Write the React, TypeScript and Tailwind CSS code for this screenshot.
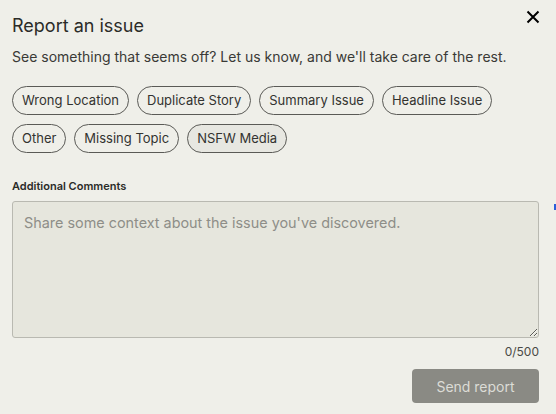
import React from 'react';

const tagsRowOne = ['Wrong Location', 'Duplicate Story', 'Summary Issue', 'Headline Issue'];
const tagsRowTwo = ['Other', 'Missing Topic', 'NSFW Media'];

function Tag({ label, active }: { label: string; active?: boolean }) {
  return (
    <button
      className={
        active
          ? 'h-[29px] px-[9px] rounded-full border border-[#5a5a56] bg-[#e7e7e1] text-[13px] text-[#333330]'
          : 'h-[29px] px-[9px] rounded-full border border-[#5a5a56] text-[13px] text-[#333330]'
      }
    >
      {label}
    </button>
  );
}

export default function App() {
  return (
    <div className="relative w-[556px] h-[414px] bg-[#efefe9] font-['Inter',sans-serif] px-3 pt-[14px]">
      <button className="absolute right-[16px] top-[10px] w-[14px] h-[14px] text-black">
        <svg viewBox="0 0 14 14" width="14" height="14" fill="none" stroke="currentColor" strokeWidth="2">
          <path d="M1.5 1.5l11 11M12.5 1.5l-11 11" />
        </svg>
      </button>
      <div className="absolute right-0 top-[204px] w-[2px] h-[6px] bg-[#2b5fd9]" />

      <h1 className="text-[18px] leading-[24px] text-[#2b2b28]">Report an issue</h1>
      <p className="mt-[9px] text-[14px] leading-[20px] text-[#3a3a36]">
        See something that seems off? Let us know, and we'll take care of the rest.
      </p>

      <div className="mt-[19px] flex flex-col gap-[9px]">
        <div className="flex gap-[8px]">
          {tagsRowOne.map((t) => (
            <Tag key={t} label={t} />
          ))}
        </div>
        <div className="flex gap-[8px]">
          {tagsRowTwo.map((t) => (
            <Tag key={t} label={t} active={t === 'NSFW Media'} />
          ))}
        </div>
      </div>

      <div className="mt-[26px] text-[11px] leading-[14px] font-semibold text-[#2b2b28]">Additional Comments</div>
      <textarea
        className="mt-[8px] block w-[527px] h-[137px] rounded-[3px] border border-[#b9b9b1] bg-[#e6e6dd] px-[11px] py-[10px] text-[14.4px] text-[#3a3a36] placeholder:text-[#8e8e88] outline-none"
        placeholder="Share some context about the issue you've discovered."
      />
      <div className="w-[527px] mt-[6px] text-right text-[12px] leading-[16px] text-[#4a4a46]">0/500</div>
      <div className="w-[527px] mt-[9px] flex justify-end">
        <button className="w-[127px] h-[34px] rounded-[4px] bg-[#8a8a84] text-[14px] text-[#dcdcd6]">
          Send report
        </button>
      </div>
    </div>
  );
}
